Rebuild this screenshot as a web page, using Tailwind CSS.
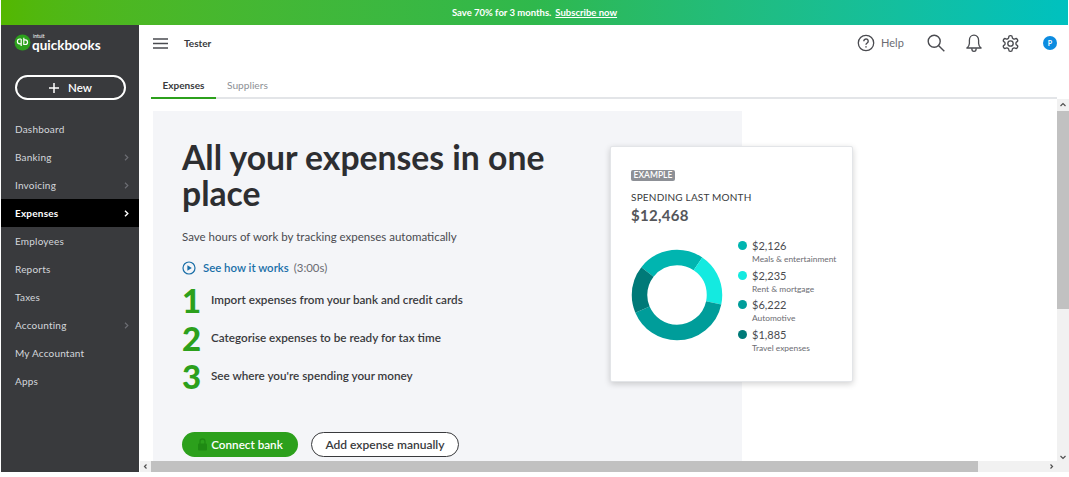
<!DOCTYPE html>
<html lang="en">
  <head>
    <meta charset="UTF-8" />
    <meta name="viewport" content="width=device-width, initial-scale=1.0" />
    <title>QuickBooks - Expenses</title>
    <script src="https://cdn.jsdelivr.net/npm/@tailwindcss/browser@4"></script>
  </head>
  <body class="bg-white overflow-hidden font-[Lato,sans-serif]">
    <div class="w-[1069px] h-[472px] pl-px flex flex-col overflow-hidden">
      <!-- Promo banner -->
      <div class="h-[25px] shrink-0 mr-px pt-px flex items-center justify-center gap-1 text-[9.5px] font-bold text-white bg-linear-to-r from-[#53b700] via-[#2fb84c] to-[#00c1bf]">
        <span>Save 70% for 3 months.</span>
        <span class="underline">Subscribe now</span>
      </div>

      <div class="flex flex-1 min-h-0">
        <!-- Sidebar -->
        <aside class="w-[138px] shrink-0 bg-[#393a3d] text-[#d4d7dc] flex flex-col">
          <div class="h-[50px] pl-[13px] pt-[8px] flex items-start gap-px">
            <svg class="w-[17px] h-[17px] mt-px" viewBox="0 0 17 17">
              <circle cx="8.5" cy="8.5" r="8" fill="#2ca01c" />
              <path d="M7.2 5v7M7.2 5H5.8a2.3 2.3 0 0 0 0 4.8h1.4M9.8 3.800v6.700h1.400a2.300 2.300 0 0 0 0-4.700H9.800" fill="none" stroke="#fff" stroke-width="1.2" />
            </svg>
            <div class="flex flex-col text-white">
              <span class="text-[5px] leading-[5px] h-[5px] pl-px mt-[1px]">intuit</span>
              <span class="text-[13.5px] leading-[13px] font-bold">quickbooks</span>
            </div>
          </div>
          <div class="px-[14px]">
            <button class="w-[111px] h-[25px] rounded-full border-2 border-white flex items-center justify-center gap-[9px] text-[11.5px] font-semibold text-white">
              <svg class="w-[10px] h-[10px]" viewBox="0 0 10 10"><path d="M5 0v10M0 5h10" stroke="#fff" stroke-width="1.5" /></svg>
              <span>New</span>
            </button>
          </div>
          <nav class="mt-[15px] flex flex-col text-[10px] tracking-[0.2px]">
            <a class="h-[28px] px-[14px] flex items-center">Dashboard</a>
            <a class="h-[28px] px-[14px] flex items-center justify-between">Banking
              <svg class="w-[5px] h-[7px] mr-[-4px]" viewBox="0 0 5 7"><path d="M1 .8 3.800 3.500 1 6.200" fill="none" stroke="#6b6c72" stroke-width="1.2" /></svg>
            </a>
            <a class="h-[28px] px-[14px] flex items-center justify-between">Invoicing
              <svg class="w-[5px] h-[7px] mr-[-4px]" viewBox="0 0 5 7"><path d="M1 .8 3.800 3.500 1 6.200" fill="none" stroke="#6b6c72" stroke-width="1.2" /></svg>
            </a>
            <a class="h-[28px] px-[14px] flex items-center justify-between bg-black text-white font-bold">Expenses
              <svg class="w-[5px] h-[7px] mr-[-4px]" viewBox="0 0 5 7"><path d="M1 .8 3.800 3.500 1 6.200" fill="none" stroke="#fff" stroke-width="1.4" /></svg>
            </a>
            <a class="h-[28px] px-[14px] flex items-center">Employees</a>
            <a class="h-[28px] px-[14px] flex items-center">Reports</a>
            <a class="h-[28px] px-[14px] flex items-center">Taxes</a>
            <a class="h-[28px] px-[14px] flex items-center justify-between">Accounting
              <svg class="w-[5px] h-[7px] mr-[-4px]" viewBox="0 0 5 7"><path d="M1 .8 3.800 3.500 1 6.200" fill="none" stroke="#6b6c72" stroke-width="1.2" /></svg>
            </a>
            <a class="h-[28px] px-[14px] flex items-center">My Accountant</a>
            <a class="h-[28px] px-[14px] flex items-center">Apps</a>
          </nav>
        </aside>

        <!-- Main -->
        <main class="flex-1 min-w-0 flex flex-col pl-px">
          <header class="h-[36px] shrink-0 flex items-center pl-[13px] text-[#393a3d]">
            <svg class="w-[15px] h-[11px]" viewBox="0 0 15 11"><path d="M0 1h15M0 5.500h15M0 10h15" stroke="#4a4b50" stroke-width="1.4" /></svg>
            <span class="ml-4 text-[10px] font-bold">Tester</span>
            <div class="ml-auto flex items-center">
              <svg class="w-[18px] h-[18px]" viewBox="0 0 18 18" fill="none" stroke="#4a4b50" stroke-width="1.3"><circle cx="9" cy="9" r="7.700" />
                <path d="M6.800 7.200a2.200 2.200 0 1 1 3.400 1.800c-.8.500-1.200 1-1.200 1.800" stroke-width="1.4" /><path d="M9 12.300v1.300" stroke-width="1.5" /></svg>
              <span class="ml-[6px] w-[23px] text-[11px] text-[#6b6c72]">Help</span>
              <svg class="ml-[23px] w-[18px] h-[18px]" viewBox="0 0 18 18" fill="none" stroke="#4a4b50" stroke-width="1.4"><circle cx="7.200" cy="7.200" r="6" /><path d="m11.500 11.500 5.800 5.800" /></svg>
              <svg class="ml-[21px] w-[16px] h-[19px]" viewBox="0 0 16 19" fill="none" stroke="#4a4b50" stroke-width="1.3" stroke-linejoin="round"><path d="M8 1.200c-2.800 0-4.600 2.200-4.600 5v3.200c0 1.900-1 3.200-2.500 4.600h14.200c-1.500-1.400-2.500-2.700-2.500-4.600V6.200c0-2.800-1.800-5-4.600-5Z" /><path d="M5.800 14.200c0 1.800 1 3.200 2.200 3.200s2.200-1.400 2.200-3.200" /></svg>
              <svg class="ml-[19px] w-[19px] h-[19px]" viewBox="0 0 24 24" fill="none" stroke="#4a4b50" stroke-width="1.7"><path d="M12.220 2h-.44a2 2 0 0 0-2 2v.18a2 2 0 0 1-1 1.730l-.43.25a2 2 0 0 1-2 0l-.15-.08a2 2 0 0 0-2.730.73l-.22.38a2 2 0 0 0 .73 2.730l.15.1a2 2 0 0 1 1 1.720v.51a2 2 0 0 1-1 1.740l-.15.09a2 2 0 0 0-.73 2.730l.22.38a2 2 0 0 0 2.730.73l.15-.08a2 2 0 0 1 2 0l.43.25a2 2 0 0 1 1 1.730V20a2 2 0 0 0 2 2h.44a2 2 0 0 0 2-2v-.18a2 2 0 0 1 1-1.730l.43-.25a2 2 0 0 1 2 0l.15.08a2 2 0 0 0 2.730-.73l.22-.39a2 2 0 0 0-.73-2.730l-.15-.08a2 2 0 0 1-1-1.740v-.5a2 2 0 0 1 1-1.740l.15-.09a2 2 0 0 0 .73-2.730l-.22-.38a2 2 0 0 0-2.730-.73l-.15.08a2 2 0 0 1-2 0l-.43-.25a2 2 0 0 1-1-1.730V4a2 2 0 0 0-2-2z" /><circle cx="12" cy="12" r="3.400" /></svg>
              <span class="ml-[23px] mr-[12px] w-[14px] h-[14px] rounded-full bg-[#0d8ce0] text-white text-[7px] font-bold flex items-center justify-center">P</span>
            </div>
          </header>

          <!-- Tabs -->
          <div class="h-[38px] shrink-0 pl-[11px] pr-[12px]">
            <div class="h-full flex items-end border-b-2 border-[#e3e5e8] text-[10px]">
              <a class="h-[27px] w-[65px] mb-[-2px] flex items-center justify-center pt-[2px] font-bold text-[#393a3d] border-b-2 border-[#2ca01c]">Expenses</a>
              <a class="h-[27px] mb-[-2px] ml-[11px] flex items-center pt-[2px] text-[#8d9096] border-b-2 border-transparent text-[10.2px]">Suppliers</a>
            </div>
          </div>

          <div class="flex-1 min-h-0 flex">
            <div class="flex-1 min-w-0 flex flex-col">
              <!-- Scrolling content -->
              <div class="relative flex-1 min-h-0 pl-[13px] pt-[12px] overflow-hidden">
                <section class="w-[589px] h-full bg-[#f4f5f8] pl-[29px] pt-[28px] text-[#393a3d]">
                  <h1 class="w-[400px] text-[33.7px] leading-[36px] font-bold text-[#2d2e31]">All your expenses in one place</h1>
                  <p class="mt-[17px] text-[11.5px] text-[#4a4b50]">Save hours of work by tracking expenses automatically</p>
                  <div class="mt-[14px] flex items-center text-[11.4px]">
                    <svg class="w-[14px] h-[14px]" viewBox="0 0 14 14"><circle cx="7" cy="7" r="6" fill="none" stroke="#1a6fa8" stroke-width="1.2" /><path d="M5.400 4.200v5.600L9.800 7Z" fill="#1a6fa8" /></svg>
                    <span class="ml-[7px] font-semibold text-[#1a6fa8]">See how it works</span>
                    <span class="ml-[5px] text-[#6b6c72]">(3:00s)</span>
                  </div>
                  <ol class="mt-[6px] flex flex-col gap-[3px]">
                    <li class="h-[35px] flex items-center"><span class="w-[29px] text-[33px] font-black text-[#2ca01c] leading-none pt-[1px]">1</span><span class="text-[11.7px] font-semibold">Import expenses from your bank and credit cards</span></li>
                    <li class="h-[35px] flex items-center"><span class="w-[29px] text-[33px] font-black text-[#2ca01c] leading-none pt-[1px]">2</span><span class="text-[11.7px] font-semibold">Categorise expenses to be ready for tax time</span></li>
                    <li class="h-[35px] flex items-center"><span class="w-[29px] text-[33px] font-black text-[#2ca01c] leading-none pt-[1px]">3</span><span class="text-[11.7px] font-semibold">See where you're spending your money</span></li>
                  </ol>
                  <div class="mt-[39px] flex gap-[13px] text-[12px] font-semibold">
                    <button class="w-[116px] h-[25px] rounded-full bg-[#2ca01c] text-white text-[11.7px] flex items-center justify-center gap-[3px]">
                      <svg class="w-[11px] h-[13px]" viewBox="0 0 11 13" fill="none"><rect x="1" y="5.500" width="9" height="7" rx="1" fill="#1f8a13" /><path d="M3 6V3.500a2.500 2.500 0 0 1 5 0V6" stroke="#1f8a13" stroke-width="1.3" /></svg>
                      <span>Connect bank</span>
                    </button>
                    <button class="w-[148px] h-[25px] rounded-full border border-[#393a3d] text-[#393a3d] bg-white">Add expense manually</button>
                  </div>
                </section>

                <!-- Example card over the panel edge -->
                <div class="absolute left-[470px] top-[47px] w-[243px] h-[236px] bg-white rounded-[2px] border border-[#e3e5e8] shadow-[0_2px_6px_rgba(0,0,0,0.18)] pl-[20px] pt-[23px]">
                  <span class="block w-[44px] h-[11px] rounded-[2px] bg-[#8d9096] text-white text-[8.5px] font-semibold leading-[11px] text-center">EXAMPLE</span>
                  <p class="mt-[9px] text-[10px] tracking-[0.2px] text-[#393a3d]">SPENDING LAST MONTH</p>
                  <p class="text-[15px] leading-[21px] font-bold tracking-[0.3px] text-[#55565a]">$12,468</p>
                  <div class="mt-[6px] flex">
                    <svg class="w-[92px] h-[92px] mt-[17px] -rotate-90" viewBox="0 0 92 92" fill="none" stroke-width="15.5">
                      <circle cx="46" cy="46" r="37.500" pathLength="360" stroke="#00b5b0" stroke-dasharray="86 274" stroke-dashoffset="52" />
                      <circle cx="46" cy="46" r="37.500" pathLength="360" stroke="#14eae0" stroke-dasharray="68 292" stroke-dashoffset="-34" />
                      <circle cx="46" cy="46" r="37.500" pathLength="360" stroke="#009d9a" stroke-dasharray="145 215" stroke-dashoffset="-102" />
                      <circle cx="46" cy="46" r="37.500" pathLength="360" stroke="#007a78" stroke-dasharray="61 299" stroke-dashoffset="-247" />
                    </svg>
                    <ul class="ml-[15px] mt-[6px] flex flex-col text-[#4a4b50]">
                      <li class="h-[30px]"><div class="flex items-center gap-[5px] text-[11px] leading-[15px]"><span class="w-[9px] h-[9px] rounded-full bg-[#00b5b0]"></span>$2,126</div><div class="pl-[14px] text-[8.4px] leading-[13px] text-[#6b6c72]">Meals &amp; entertainment</div></li>
                      <li class="h-[29px]"><div class="flex items-center gap-[5px] text-[11px] leading-[15px]"><span class="w-[9px] h-[9px] rounded-full bg-[#14eae0]"></span>$2,235</div><div class="pl-[14px] text-[8.4px] leading-[13px] text-[#6b6c72]">Rent &amp; mortgage</div></li>
                      <li class="h-[30px]"><div class="flex items-center gap-[5px] text-[11px] leading-[15px]"><span class="w-[9px] h-[9px] rounded-full bg-[#009d9a]"></span>$6,222</div><div class="pl-[14px] text-[8.4px] leading-[13px] text-[#6b6c72]">Automotive</div></li>
                      <li class="h-[29px]"><div class="flex items-center gap-[5px] text-[11px] leading-[15px]"><span class="w-[9px] h-[9px] rounded-full bg-[#007a78]"></span>$1,885</div><div class="pl-[14px] text-[8.4px] leading-[13px] text-[#6b6c72]">Travel expenses</div></li>
                    </ul>
                  </div>
                </div>
              </div>

              <!-- Horizontal scrollbar -->
              <div class="h-[11px] shrink-0 bg-[#f1f1f1] flex items-center">
                <svg class="w-[11px] h-[11px]" viewBox="0 0 11 11"><path d="M6.500 3.500 4.500 5.500l2 2" fill="none" stroke="#505050" stroke-width="1.2" /></svg>
                <div class="w-[827px] h-full bg-[#c1c1c1]"></div>
                <svg class="ml-auto w-[11px] h-[11px]" viewBox="0 0 11 11"><path d="M4.500 3.500l2 2-2 2" fill="none" stroke="#505050" stroke-width="1.2" /></svg>
              </div>
            </div>

            <!-- Vertical scrollbar -->
            <div class="w-[12px] shrink-0 bg-[#f1f1f1] flex flex-col items-stretch">
              <svg class="w-[12px] h-[12px] shrink-0" viewBox="0 0 12 12"><path d="M3.500 7 6 4.500 8.500 7" fill="none" stroke="#505050" stroke-width="1.2" /></svg>
              <div class="h-[198px] bg-[#c1c1c1]"></div>
              <svg class="mt-auto mb-[9px] w-[12px] h-[12px] shrink-0" viewBox="0 0 12 12"><path d="M3.500 5 6 7.500 8.500 5" fill="none" stroke="#505050" stroke-width="1.2" /></svg>
            </div>
          </div>
        </main>
      </div>
    </div>
  </body>
</html>
